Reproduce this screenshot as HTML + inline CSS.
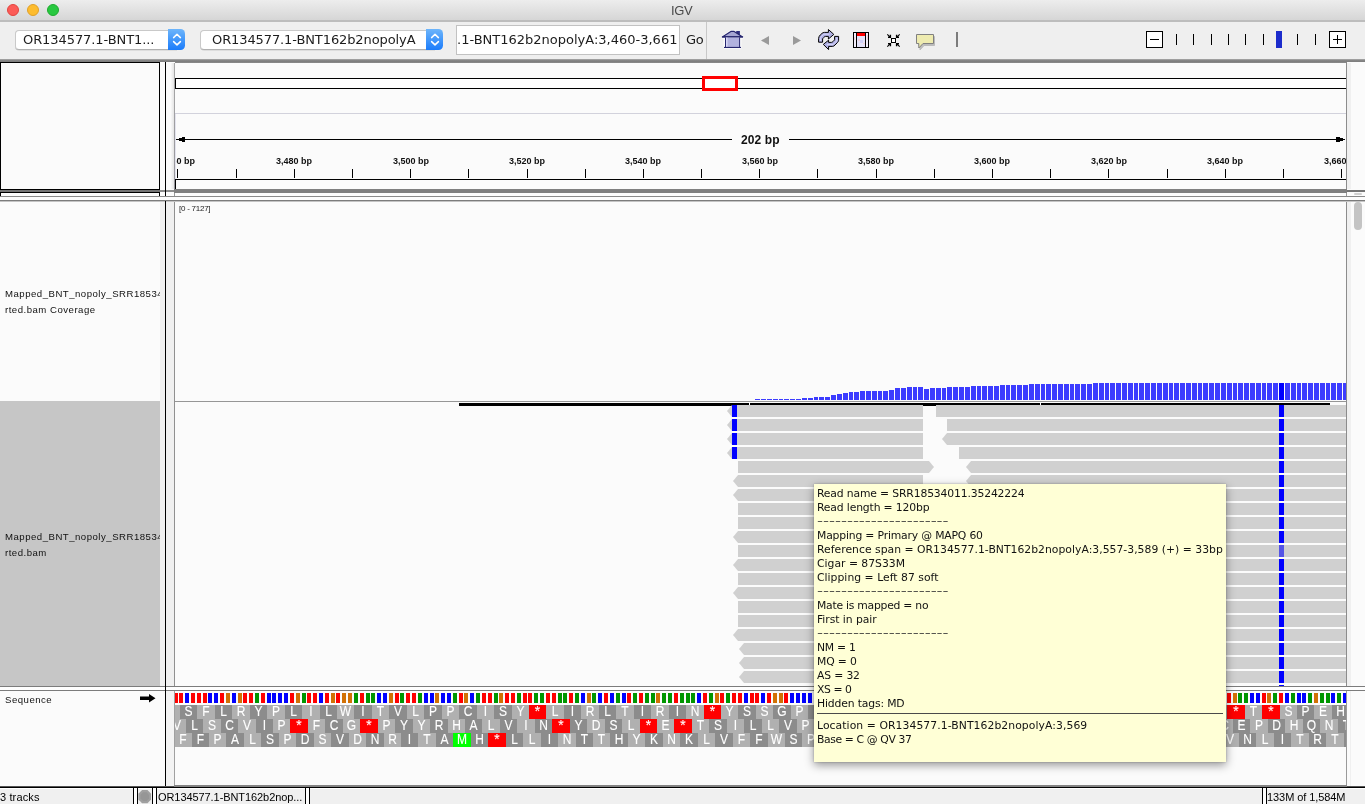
<!DOCTYPE html>
<html lang="en">
<head>
<meta charset="utf-8">
<title>IGV</title>
<style>
html,body{margin:0;padding:0;}
body{width:1365px;height:804px;overflow:hidden;position:relative;background:#fbfbfb;font-family:"Liberation Sans",sans-serif;color:#000;}
.a{position:absolute;}
.t{position:absolute;white-space:pre;line-height:1;will-change:transform;}
.lg{font-family:"DejaVu Sans","Liberation Sans",sans-serif;}
#titlebar{left:0;top:0;width:1365px;height:20px;background:linear-gradient(#ededed,#d6d6d6);border-bottom:2px solid #bdbdbd;}
#toolbar{left:0;top:22px;width:1365px;height:37px;background:#efefef;}
.dot{position:absolute;top:4px;width:12px;height:12px;border-radius:50%;box-sizing:border-box;}
.combo{position:absolute;top:29px;height:21px;box-sizing:border-box;}
.combo .w{position:absolute;left:-0.5px;top:0.5px;bottom:0.5px;right:8px;background:#fff;border:1px solid #c9c9c9;border-bottom-color:#b0b0b0;border-radius:4px 0 0 4px;box-shadow:0 0.5px 0.5px rgba(0,0,0,0.15);}
.combo .b{position:absolute;right:0;top:0;width:17px;height:21px;border-radius:0 4.5px 4.5px 0;background:linear-gradient(#6db5fb,#1b7cfb);}
#tip{left:814px;top:484px;width:412px;height:278px;background:#ffffd6;box-shadow:0 3px 9px rgba(0,0,0,0.42),0 0 2px rgba(0,0,0,0.25);}

.nm{font-size:9.6px;color:#111;letter-spacing:0.5px;}
.rl{font-weight:bold;font-size:9px;color:#111;}
.sb{position:absolute;top:787px;height:18px;box-sizing:border-box;border:1px solid #000;border-bottom:none;background:linear-gradient(#fff 0,#fff 1px,#f0f0f0 1px);}
.st{font-size:11px;color:#000;}
.aa{font-size:14px;fill:#fff;stroke:#fff;stroke-width:0.12px;text-anchor:middle;font-family:"Liberation Sans",sans-serif;}
</style>
</head>
<body>

<div id="titlebar" class="a">
<div class="dot" style="left:7px;background:#fc5b57;border:0.5px solid #e2443f;"></div>
<div class="dot" style="left:27px;background:#fdbc2e;border:0.5px solid #e0a028;"></div>
<div class="dot" style="left:47px;background:#28c840;border:0.5px solid #1eab2e;"></div>
<div class="t " id="ttl" style="left:671px;top:3.6px;font-size:13px;letter-spacing:-0.400px;color:#4a4a4a;">IGV</div>
</div>
<div id="toolbar" class="a"></div>
<div class="combo" style="left:15px;width:170px;"><div class="w"></div><div class="b"></div></div>
<div class="combo" style="left:200px;width:243px;"><div class="w"></div><div class="b"></div></div>
<div class="t lg" id="c1" style="left:23px;top:32.8px;font-size:13px;letter-spacing:-0.075px;color:#1c1c1c;">OR134577.1-BNT1...</div>
<div class="t lg" id="c2" style="left:212px;top:32.8px;font-size:13px;letter-spacing:-0.100px;color:#1c1c1c;">OR134577.1-BNT162b2nopolyA</div>
<svg class="a" style="left:170.5px;top:29px;" width="12" height="21" viewBox="0 0 12 21"><path d="M2.6 8.6 L6 5.3 L9.4 8.6 M2.6 12.6 L6 15.9 L9.4 12.6" fill="none" stroke="#fff" stroke-width="1.5" stroke-linecap="round" stroke-linejoin="round"/></svg>
<svg class="a" style="left:428.5px;top:29px;" width="12" height="21" viewBox="0 0 12 21"><path d="M2.6 8.6 L6 5.3 L9.4 8.6 M2.6 12.6 L6 15.9 L9.4 12.6" fill="none" stroke="#fff" stroke-width="1.5" stroke-linecap="round" stroke-linejoin="round"/></svg>
<div class="a" style="left:456px;top:25px;width:224px;height:30px;box-sizing:border-box;background:#fff;border:1px solid #c2c2c2;overflow:hidden;"><div class="t lg" id="c3" style="left:0px;top:6.8px;font-size:13px;letter-spacing:0.000px;color:#1c1c1c;">.1-BNT162b2nopolyA:3,460-3,661</div></div>
<div class="t lg" id="c4" style="left:686px;top:32.8px;font-size:13px;letter-spacing:-0.225px;color:#1c1c1c;">Go</div>
<div class="a" style="left:706px;top:22px;width:1px;height:37px;background:#c8c8c8;"></div>
<svg class="a" style="left:710px;top:22px;" width="260" height="37" viewBox="710 22 260 37">
<g shape-rendering="auto"><path d="M722 37.4 L731 31 H734 L743 37.4 Z" fill="#fff" stroke="#fff" stroke-width="2.2" stroke-linejoin="round" opacity="0.9"/><rect x="723.6" y="37" width="17.8" height="11.6" fill="#fff" opacity="0.9"/><rect x="736.2" y="31" width="3.7" height="4.6" fill="#2d2d7e"/><path d="M722.3 36.9 L731.2 31.3 H733.8 L742.7 36.9 Z" fill="#a6a6d2" stroke="#26266e" stroke-width="1.2" stroke-linejoin="round"/><rect x="722" y="36.3" width="21" height="1.3" rx="0.6" fill="#26266e"/><rect x="725.5" y="37.6" width="14" height="9.6" fill="#b2b2de"/><rect x="725.9" y="37.6" width="1.6" height="9.6" fill="#d6d6f6"/><rect x="725" y="37.4" width="1" height="10" fill="#26266e"/><rect x="739.1" y="37.4" width="1" height="10" fill="#26266e"/><rect x="724" y="46.9" width="17" height="1.1" fill="#26266e"/></g>
<path d="M761 40.5 L769 36 V45 Z" fill="#9a9a9a"/><path d="M801 40.5 L793 36 V45 Z" fill="#9a9a9a"/>
<g stroke="#000" stroke-width="1" stroke-linejoin="miter" fill="#b0b0e2"><path d="M818.6 42.2 V38.4 Q818.8 36.4 820.2 35 L822 33.4 Q823 32.4 824.4 32.4 H828.4 V29.5 L833.8 34.4 L828.4 39 V36.4 H825.6 Q824.6 36.5 823.8 37.4 L822.6 38.8 V42.2 Z"/><path d="M838.6 36.4 V40.4 Q838.4 41.6 837.4 42.6 L835 45 Q833.8 46.4 832.6 46.4 H828.6 V49.6 L823.3 44.4 L828.6 40.2 V42.4 H831.4 Q832.2 42.3 833 41.6 L834.6 39.8 V36.4 Z"/></g><path d="M820.4 41 V38.6 Q820.6 37.2 821.6 36.2 L823.4 34.6 Q824 34.2 825 34.2 H829.4" stroke="#d6d6fa" stroke-width="1" fill="none"/><path d="M836.8 37.6 V40.2 Q836.6 41.2 835.8 42 L833.6 44 Q833 44.6 832 44.6 H827" stroke="#d6d6fa" stroke-width="1" fill="none"/>
<g shape-rendering="crispEdges"><rect x="853" y="32" width="16" height="16" fill="#000"/><rect x="854" y="33" width="14" height="14" fill="#f3effb"/><rect x="857" y="36" width="8" height="11" fill="#e4e2f8"/><rect x="857" y="33" width="8" height="3" fill="#ff0000"/><rect x="856" y="33" width="1" height="14" fill="#000"/><rect x="865" y="33" width="1" height="14" fill="#000"/><rect x="854" y="37" width="1" height="3" fill="#f0d4dc"/><rect x="867" y="35" width="1" height="5" fill="#f0d4dc"/><rect x="858" y="39" width="2" height="2" fill="#f2cfd6"/><rect x="860" y="40" width="3" height="3" fill="#cfcff6"/><rect x="863" y="43" width="2" height="1" fill="#f2cfd6"/></g>
<g stroke="#000" fill="none"><rect x="891.5" y="38.5" width="4" height="4" fill="#fff" stroke-width="1" shape-rendering="crispEdges"/><path d="M887.3 34.3 L890.4 37.4 M899.7 34.3 L896.6 37.4 M887.3 46.7 L890.4 43.6 M899.7 46.7 L896.6 43.6" stroke-width="1.1"/><path d="M888 37.2 H890.4 V34.8 M899 37.2 H896.6 V34.8 M888 43.8 H890.4 V46.2 M899 43.8 H896.6 V46.2" stroke-width="1.4"/></g>
<path d="M917.5 35.5 H933.5 V44.5 H923 L919 49 V44.5 H917.5 Z" fill="#9a9a9a" stroke="#9a9a9a" stroke-width="1" opacity="0.6" transform="translate(1,1)"/><path d="M916.5 34.5 H933.5 V43.5 H923 L918.8 48 V43.5 H916.5 Z" fill="#eeebb0" stroke="#808080" stroke-width="1"/>
<rect x="956" y="32" width="2" height="15" fill="#7c7c7c"/>
</svg>
<svg class="a" style="left:1140px;top:22px;" width="225" height="37" viewBox="1140 22 225 37">
<rect x="1146.5" y="31.5" width="16" height="16" fill="#fff" stroke="#000"/><path d="M1150 39.5 H1159" stroke="#000" stroke-width="1"/>
<rect x="1176" y="34" width="1" height="11" fill="#000"/>
<rect x="1193" y="34" width="1" height="11" fill="#000"/>
<rect x="1211" y="34" width="1" height="11" fill="#000"/>
<rect x="1228" y="34" width="1" height="11" fill="#000"/>
<rect x="1245" y="34" width="1" height="11" fill="#000"/>
<rect x="1263" y="34" width="1" height="11" fill="#000"/>
<rect x="1297" y="34" width="1" height="11" fill="#000"/>
<rect x="1315" y="34" width="1" height="11" fill="#000"/>
<rect x="1276" y="31" width="6" height="17" fill="#1c2ccc"/>
<rect x="1329.5" y="31.5" width="16" height="16" fill="#fff" stroke="#000"/><path d="M1333 39.5 H1342 M1337.5 35 V44" stroke="#000" stroke-width="1"/>
</svg>
<div class="a" style="left:0;top:59px;width:1365px;height:4px;background:linear-gradient(#b4b4b4 0,#8a8a8a 25%,#7e7e7e 60%,#8c8c8c 100%);"></div>
<div class="a" style="left:0;top:62px;width:160px;height:128px;box-sizing:border-box;border:1px solid #000;background:#fbfbfb;"></div>
<div class="a" style="left:160px;top:62px;width:15px;height:128px;background:#fbfbfb;"></div>
<div class="a" style="left:171px;top:63px;width:3px;height:126px;background:linear-gradient(90deg,#f8f8f8,#e4e4e4);"></div>
<div class="a" style="left:1347px;top:62px;width:18px;height:128px;background:#fbfbfb;"></div>
<div class="a" style="left:1347px;top:63px;width:4px;height:126px;background:#f0f0f0;"></div>
<div class="a" style="left:0;top:189px;width:160px;height:4px;background:#000;"></div>
<div class="a" style="left:0;top:190px;width:160px;height:2px;background:#757575;"></div>
<div class="a" style="left:160px;top:190px;width:14px;height:2px;background:#8c8c8c;"></div>
<div class="a" style="left:174px;top:189px;width:1173px;height:4px;background:#808080;"></div>
<div class="a" style="left:1347px;top:190px;width:18px;height:2px;background:#757575;"></div>
<div class="a" style="left:0;top:193px;width:1365px;height:3px;background:#fdfdfd;"></div>
<div class="a" style="left:0;top:193px;width:1px;height:3px;background:#000;"></div>
<div class="a" style="left:159px;top:193px;width:1px;height:3px;background:#000;"></div>
<div class="a" style="left:174px;top:193px;width:1px;height:3px;background:#9a9a9a;"></div>
<div class="a" style="left:1346px;top:193px;width:1px;height:3px;background:#9a9a9a;"></div>
<div class="a" style="left:1354px;top:193px;width:8px;height:2px;background:#d0d0d0;border-radius:1px;"></div>
<div class="a" style="left:0;top:196px;width:1365px;height:1px;background:#8a8a8a;"></div>
<div class="a" style="left:0;top:197px;width:1365px;height:3px;background:#fdfdfd;"></div>
<div class="a" style="left:0;top:200px;width:1365px;height:1px;background:#7c7c7c;"></div>
<div class="a" style="left:0;top:201px;width:1365px;height:1px;background:#c4c4c4;"></div>
<div class="a" style="left:0;top:401px;width:160px;height:285px;background:#c6c6c6;"></div>
<div class="a" style="left:160px;top:202px;width:14px;height:484px;background:#f0f0f0;"></div>
<div class="a" style="left:166px;top:691px;width:8px;height:95px;background:#f3f3f3;"></div>
<div class="a" style="left:165px;top:62px;width:1px;height:134px;background:#000;"></div>
<div class="a" style="left:165px;top:201px;width:1px;height:586px;background:#000;"></div>
<div class="a" style="left:0;top:196px;width:1365px;height:1px;background:#8a8a8a;"></div>
<div class="a" style="left:174px;top:63px;width:1px;height:126px;background:linear-gradient(#a8a8a8,#96969c);"></div>
<div class="a" style="left:175px;top:114px;width:1px;height:65px;background:#e4e4ee;"></div>
<div class="a" style="left:174px;top:202px;width:1px;height:484px;background:#909090;"></div>
<div class="a" style="left:174px;top:691px;width:1px;height:95px;background:#a0a0a0;"></div>
<div class="a" style="left:1346px;top:63px;width:1px;height:126px;background:#8c8c8c;"></div>
<div class="a" style="left:1346px;top:202px;width:1px;height:484px;background:#8c8c8c;"></div>
<div class="a" style="left:1346px;top:691px;width:1px;height:95px;background:#9a9a9a;"></div>
<div class="a" style="left:1347px;top:202px;width:4px;height:484px;background:#f0f0f0;"></div>
<div class="a" style="left:1354px;top:202px;width:8px;height:28px;background:#c4c4c4;border-radius:4px;"></div>
<div class="a" style="left:1350px;top:691px;width:1px;height:95px;background:#f0f0f0;"></div>
<div class="a" style="left:0;top:686px;width:1365px;height:1px;background:#7c7c7c;"></div>
<div class="a" style="left:0;top:687px;width:1365px;height:3px;background:#fefefe;"></div>
<div class="a" style="left:0;top:690px;width:1365px;height:1px;background:#7c7c7c;"></div>
<div class="a" style="left:165px;top:686px;width:1px;height:5px;background:#000;"></div>
<svg class="a" style="left:175px;top:63px;will-change:transform;" width="1171" height="723" viewBox="175 63 1171 723" shape-rendering="crispEdges">
<rect x="175" y="79" width="1171" height="9" fill="#fff"/>
<rect x="175" y="78" width="1171" height="1" fill="#000"/><rect x="175" y="88" width="1171" height="1" fill="#000"/><rect x="175" y="78" width="1" height="11" fill="#000"/>
<rect x="703.5" y="77.5" width="33" height="12" fill="#fff" stroke="#ff0000" stroke-width="3"/>
<rect x="175" y="113" width="1171" height="1" fill="#d2d2dc"/>
<rect x="176" y="139" width="556" height="1" fill="#000"/><rect x="789" y="139" width="556" height="1" fill="#000"/>
<rect x="179" y="138" width="3" height="3" fill="#000"/><rect x="182" y="137" width="3" height="5" fill="#000"/>
<rect x="1336" y="137" width="4" height="5" fill="#000"/><rect x="1340" y="138" width="3" height="3" fill="#000"/>
<rect x="177" y="169" width="1" height="9" fill="#000"/>
<rect x="236" y="169" width="1" height="9" fill="#000"/>
<rect x="294" y="169" width="1" height="9" fill="#000"/>
<rect x="352" y="169" width="1" height="9" fill="#000"/>
<rect x="410" y="169" width="1" height="9" fill="#000"/>
<rect x="468" y="169" width="1" height="9" fill="#000"/>
<rect x="527" y="169" width="1" height="9" fill="#000"/>
<rect x="585" y="169" width="1" height="9" fill="#000"/>
<rect x="643" y="169" width="1" height="9" fill="#000"/>
<rect x="701" y="169" width="1" height="9" fill="#000"/>
<rect x="759" y="169" width="1" height="9" fill="#000"/>
<rect x="817" y="169" width="1" height="9" fill="#000"/>
<rect x="876" y="169" width="1" height="9" fill="#000"/>
<rect x="934" y="169" width="1" height="9" fill="#000"/>
<rect x="992" y="169" width="1" height="9" fill="#000"/>
<rect x="1050" y="169" width="1" height="9" fill="#000"/>
<rect x="1108" y="169" width="1" height="9" fill="#000"/>
<rect x="1167" y="169" width="1" height="9" fill="#000"/>
<rect x="1225" y="169" width="1" height="9" fill="#000"/>
<rect x="1283" y="169" width="1" height="9" fill="#000"/>
<rect x="1341" y="169" width="1" height="9" fill="#000"/>
<rect x="175" y="179" width="1171" height="1" fill="#000"/><rect x="175" y="179" width="1" height="10" fill="#000"/>
<rect x="755" y="399" width="5" height="1" fill="#3c3cff"/>
<rect x="761" y="399" width="5" height="1" fill="#3c3cff"/>
<rect x="767" y="399" width="5" height="1" fill="#3c3cff"/>
<rect x="773" y="399" width="5" height="1" fill="#3c3cff"/>
<rect x="779" y="399" width="4" height="1" fill="#3c3cff"/>
<rect x="784" y="399" width="5" height="1" fill="#3c3cff"/>
<rect x="790" y="399" width="5" height="1" fill="#3c3cff"/>
<rect x="796" y="399" width="5" height="1" fill="#3c3cff"/>
<rect x="802" y="398" width="5" height="2" fill="#3c3cff"/>
<rect x="808" y="398" width="5" height="2" fill="#3c3cff"/>
<rect x="814" y="397" width="4" height="3" fill="#3c3cff"/>
<rect x="819" y="397" width="5" height="3" fill="#3c3cff"/>
<rect x="825" y="397" width="5" height="3" fill="#3c3cff"/>
<rect x="831" y="395" width="5" height="5" fill="#3c3cff"/>
<rect x="837" y="394" width="5" height="6" fill="#3c3cff"/>
<rect x="843" y="393" width="5" height="7" fill="#3c3cff"/>
<rect x="849" y="392" width="4" height="8" fill="#3c3cff"/>
<rect x="854" y="392" width="5" height="8" fill="#3c3cff"/>
<rect x="860" y="391" width="5" height="9" fill="#3c3cff"/>
<rect x="866" y="391" width="5" height="9" fill="#3c3cff"/>
<rect x="872" y="391" width="5" height="9" fill="#3c3cff"/>
<rect x="878" y="391" width="4" height="9" fill="#3c3cff"/>
<rect x="883" y="391" width="5" height="9" fill="#3c3cff"/>
<rect x="889" y="390" width="5" height="10" fill="#3c3cff"/>
<rect x="895" y="388" width="5" height="12" fill="#3c3cff"/>
<rect x="901" y="388" width="5" height="12" fill="#3c3cff"/>
<rect x="907" y="387" width="5" height="13" fill="#3c3cff"/>
<rect x="913" y="387" width="4" height="13" fill="#3c3cff"/>
<rect x="918" y="387" width="5" height="13" fill="#3c3cff"/>
<rect x="924" y="389" width="5" height="11" fill="#3c3cff"/>
<rect x="930" y="388" width="5" height="12" fill="#3c3cff"/>
<rect x="936" y="388" width="5" height="12" fill="#3c3cff"/>
<rect x="942" y="388" width="4" height="12" fill="#3c3cff"/>
<rect x="947" y="387" width="5" height="13" fill="#3c3cff"/>
<rect x="953" y="387" width="5" height="13" fill="#3c3cff"/>
<rect x="959" y="387" width="5" height="13" fill="#3c3cff"/>
<rect x="965" y="387" width="5" height="13" fill="#3c3cff"/>
<rect x="971" y="386" width="5" height="14" fill="#3c3cff"/>
<rect x="977" y="386" width="4" height="14" fill="#3c3cff"/>
<rect x="982" y="386" width="5" height="14" fill="#3c3cff"/>
<rect x="988" y="386" width="5" height="14" fill="#3c3cff"/>
<rect x="994" y="386" width="5" height="14" fill="#3c3cff"/>
<rect x="1000" y="385" width="5" height="15" fill="#3c3cff"/>
<rect x="1006" y="385" width="4" height="15" fill="#3c3cff"/>
<rect x="1011" y="385" width="5" height="15" fill="#3c3cff"/>
<rect x="1017" y="385" width="5" height="15" fill="#3c3cff"/>
<rect x="1023" y="385" width="5" height="15" fill="#3c3cff"/>
<rect x="1029" y="384" width="5" height="16" fill="#3c3cff"/>
<rect x="1035" y="384" width="5" height="16" fill="#3c3cff"/>
<rect x="1041" y="384" width="4" height="16" fill="#3c3cff"/>
<rect x="1046" y="384" width="5" height="16" fill="#3c3cff"/>
<rect x="1052" y="384" width="5" height="16" fill="#3c3cff"/>
<rect x="1058" y="384" width="5" height="16" fill="#3c3cff"/>
<rect x="1064" y="384" width="5" height="16" fill="#3c3cff"/>
<rect x="1070" y="384" width="4" height="16" fill="#3c3cff"/>
<rect x="1075" y="384" width="5" height="16" fill="#3c3cff"/>
<rect x="1081" y="384" width="5" height="16" fill="#3c3cff"/>
<rect x="1087" y="384" width="5" height="16" fill="#3c3cff"/>
<rect x="1093" y="383" width="5" height="17" fill="#3c3cff"/>
<rect x="1099" y="383" width="5" height="17" fill="#3c3cff"/>
<rect x="1105" y="383" width="4" height="17" fill="#3c3cff"/>
<rect x="1110" y="383" width="5" height="17" fill="#3c3cff"/>
<rect x="1116" y="383" width="5" height="17" fill="#3c3cff"/>
<rect x="1122" y="383" width="5" height="17" fill="#3c3cff"/>
<rect x="1128" y="383" width="5" height="17" fill="#3c3cff"/>
<rect x="1134" y="383" width="4" height="17" fill="#3c3cff"/>
<rect x="1139" y="383" width="5" height="17" fill="#3c3cff"/>
<rect x="1145" y="383" width="5" height="17" fill="#3c3cff"/>
<rect x="1151" y="383" width="5" height="17" fill="#3c3cff"/>
<rect x="1157" y="383" width="5" height="17" fill="#3c3cff"/>
<rect x="1163" y="383" width="5" height="17" fill="#3c3cff"/>
<rect x="1169" y="383" width="4" height="17" fill="#3c3cff"/>
<rect x="1174" y="383" width="5" height="17" fill="#3c3cff"/>
<rect x="1180" y="383" width="5" height="17" fill="#3c3cff"/>
<rect x="1186" y="383" width="5" height="17" fill="#3c3cff"/>
<rect x="1192" y="383" width="5" height="17" fill="#3c3cff"/>
<rect x="1198" y="383" width="4" height="17" fill="#3c3cff"/>
<rect x="1203" y="383" width="5" height="17" fill="#3c3cff"/>
<rect x="1209" y="383" width="5" height="17" fill="#3c3cff"/>
<rect x="1215" y="383" width="5" height="17" fill="#3c3cff"/>
<rect x="1221" y="383" width="5" height="17" fill="#3c3cff"/>
<rect x="1227" y="383" width="5" height="17" fill="#3c3cff"/>
<rect x="1233" y="383" width="4" height="17" fill="#3c3cff"/>
<rect x="1238" y="383" width="5" height="17" fill="#3c3cff"/>
<rect x="1244" y="383" width="5" height="17" fill="#3c3cff"/>
<rect x="1250" y="383" width="5" height="17" fill="#3c3cff"/>
<rect x="1256" y="383" width="5" height="17" fill="#3c3cff"/>
<rect x="1262" y="383" width="4" height="17" fill="#3c3cff"/>
<rect x="1267" y="383" width="5" height="17" fill="#3c3cff"/>
<rect x="1273" y="383" width="5" height="17" fill="#3c3cff"/>
<rect x="1279" y="383" width="5" height="17" fill="#0000ff"/>
<rect x="1285" y="383" width="5" height="17" fill="#3c3cff"/>
<rect x="1291" y="383" width="5" height="17" fill="#3c3cff"/>
<rect x="1297" y="383" width="4" height="17" fill="#3c3cff"/>
<rect x="1302" y="383" width="5" height="17" fill="#3c3cff"/>
<rect x="1308" y="383" width="5" height="17" fill="#3c3cff"/>
<rect x="1314" y="383" width="5" height="17" fill="#3c3cff"/>
<rect x="1320" y="383" width="5" height="17" fill="#3c3cff"/>
<rect x="1326" y="383" width="4" height="17" fill="#3c3cff"/>
<rect x="1331" y="383" width="5" height="17" fill="#3c3cff"/>
<rect x="1337" y="383" width="5" height="17" fill="#3c3cff"/>
<rect x="1343" y="383" width="3" height="17" fill="#3c3cff"/>
<rect x="175" y="401" width="1171" height="1" fill="#969696"/>
<rect x="459" y="403" width="871" height="3" fill="#000"/>
<rect x="749" y="403" width="1" height="3" fill="#fff"/><rect x="1040" y="403" width="1" height="3" fill="#fff"/>
<polygon points="732,405 727,411 732,417 923,417 923,405" fill="#d0d0d0" shape-rendering="auto"/>
<rect x="732" y="405" width="5" height="12" fill="#0000ff"/>
<polygon points="936,405 936,417 1346,417 1346,405" fill="#d0d0d0" shape-rendering="auto"/>
<rect x="1279" y="405" width="5" height="12" fill="#0000ff"/>
<polygon points="732,419 727,425 732,431 923,431 923,419" fill="#d0d0d0" shape-rendering="auto"/>
<rect x="732" y="419" width="5" height="12" fill="#0000ff"/>
<polygon points="947,419 947,431 1346,431 1346,419" fill="#d0d0d0" shape-rendering="auto"/>
<rect x="1279" y="419" width="5" height="12" fill="#0000ff"/>
<polygon points="732,433 727,439 732,445 923,445 923,433" fill="#d0d0d0" shape-rendering="auto"/>
<rect x="732" y="433" width="5" height="12" fill="#0000ff"/>
<polygon points="947,433 942,439 947,445 1346,445 1346,433" fill="#d0d0d0" shape-rendering="auto"/>
<rect x="1279" y="433" width="5" height="12" fill="#0000ff"/>
<polygon points="732,447 727,453 732,459 923,459 923,447" fill="#d0d0d0" shape-rendering="auto"/>
<rect x="732" y="447" width="5" height="12" fill="#0000ff"/>
<polygon points="959,447 959,459 1346,459 1346,447" fill="#d0d0d0" shape-rendering="auto"/>
<rect x="1279" y="447" width="5" height="12" fill="#0000ff"/>
<polygon points="738,461 738,473 929,473 934,467 929,461" fill="#d0d0d0" shape-rendering="auto"/>
<polygon points="971,461 966,467 971,473 1346,473 1346,461" fill="#d0d0d0" shape-rendering="auto"/>
<rect x="1279" y="461" width="5" height="12" fill="#0000ff"/>
<polygon points="738,475 733,481 738,487 923,487 923,475" fill="#d0d0d0" shape-rendering="auto"/>
<polygon points="971,475 966,481 971,487 1346,487 1346,475" fill="#d0d0d0" shape-rendering="auto"/>
<rect x="1279" y="475" width="5" height="12" fill="#0000ff"/>
<polygon points="738,489 733,495 738,501 1346,501 1346,489" fill="#d0d0d0" shape-rendering="auto"/>
<rect x="1279" y="489" width="5" height="12" fill="#0000ff"/>
<polygon points="738,503 738,515 1346,515 1346,503" fill="#d0d0d0" shape-rendering="auto"/>
<rect x="1279" y="503" width="5" height="12" fill="#0000ff"/>
<polygon points="738,517 738,529 1346,529 1346,517" fill="#d0d0d0" shape-rendering="auto"/>
<rect x="1279" y="517" width="5" height="12" fill="#0000ff"/>
<polygon points="738,531 733,537 738,543 1346,543 1346,531" fill="#d0d0d0" shape-rendering="auto"/>
<rect x="1279" y="531" width="5" height="12" fill="#0000ff"/>
<polygon points="738,545 738,557 1346,557 1346,545" fill="#d0d0d0" shape-rendering="auto"/>
<rect x="1279" y="545" width="5" height="12" fill="#5555e6"/>
<polygon points="738,559 733,565 738,571 1346,571 1346,559" fill="#d0d0d0" shape-rendering="auto"/>
<rect x="1279" y="559" width="5" height="12" fill="#0000ff"/>
<polygon points="738,573 738,585 1346,585 1346,573" fill="#d0d0d0" shape-rendering="auto"/>
<rect x="1279" y="573" width="5" height="12" fill="#0000ff"/>
<polygon points="738,587 733,593 738,599 1346,599 1346,587" fill="#d0d0d0" shape-rendering="auto"/>
<rect x="1279" y="587" width="5" height="12" fill="#0000ff"/>
<polygon points="738,601 738,613 1346,613 1346,601" fill="#d0d0d0" shape-rendering="auto"/>
<rect x="1279" y="601" width="5" height="12" fill="#0000ff"/>
<polygon points="738,615 738,627 1346,627 1346,615" fill="#d0d0d0" shape-rendering="auto"/>
<rect x="1279" y="615" width="5" height="12" fill="#0000ff"/>
<polygon points="738,629 733,635 738,641 1346,641 1346,629" fill="#d0d0d0" shape-rendering="auto"/>
<rect x="1279" y="629" width="5" height="12" fill="#0000ff"/>
<polygon points="744,643 739,649 744,655 1346,655 1346,643" fill="#d0d0d0" shape-rendering="auto"/>
<rect x="1279" y="643" width="5" height="12" fill="#0000ff"/>
<polygon points="744,657 739,663 744,669 1346,669 1346,657" fill="#d0d0d0" shape-rendering="auto"/>
<rect x="1279" y="657" width="5" height="12" fill="#0000ff"/>
<polygon points="744,671 739,677 744,683 1346,683 1346,671" fill="#d0d0d0" shape-rendering="auto"/>
<rect x="1279" y="671" width="5" height="12" fill="#0000ff"/>
<rect x="1279" y="685" width="5" height="1" fill="#0000ff"/>
<rect x="175" y="693" width="3" height="10" fill="#ff0000"/>
<rect x="179" y="693" width="4" height="10" fill="#ff0000"/>
<rect x="185" y="693" width="4" height="10" fill="#0000ff"/>
<rect x="191" y="693" width="4" height="10" fill="#ff0000"/>
<rect x="197" y="693" width="4" height="10" fill="#ff0000"/>
<rect x="203" y="693" width="4" height="10" fill="#ff0000"/>
<rect x="208" y="693" width="4" height="10" fill="#0000ff"/>
<rect x="214" y="693" width="4" height="10" fill="#0000ff"/>
<rect x="220" y="693" width="4" height="10" fill="#ff0000"/>
<rect x="226" y="693" width="4" height="10" fill="#d17105"/>
<rect x="232" y="693" width="4" height="10" fill="#0000ff"/>
<rect x="238" y="693" width="4" height="10" fill="#d17105"/>
<rect x="243" y="693" width="4" height="10" fill="#ff0000"/>
<rect x="249" y="693" width="4" height="10" fill="#ff0000"/>
<rect x="255" y="693" width="4" height="10" fill="#009600"/>
<rect x="261" y="693" width="4" height="10" fill="#ff0000"/>
<rect x="267" y="693" width="4" height="10" fill="#0000ff"/>
<rect x="272" y="693" width="4" height="10" fill="#0000ff"/>
<rect x="278" y="693" width="4" height="10" fill="#0000ff"/>
<rect x="284" y="693" width="4" height="10" fill="#0000ff"/>
<rect x="290" y="693" width="4" height="10" fill="#ff0000"/>
<rect x="296" y="693" width="4" height="10" fill="#d17105"/>
<rect x="302" y="693" width="4" height="10" fill="#009600"/>
<rect x="307" y="693" width="4" height="10" fill="#ff0000"/>
<rect x="313" y="693" width="4" height="10" fill="#ff0000"/>
<rect x="319" y="693" width="4" height="10" fill="#0000ff"/>
<rect x="325" y="693" width="4" height="10" fill="#ff0000"/>
<rect x="331" y="693" width="4" height="10" fill="#d17105"/>
<rect x="336" y="693" width="4" height="10" fill="#ff0000"/>
<rect x="342" y="693" width="4" height="10" fill="#d17105"/>
<rect x="348" y="693" width="4" height="10" fill="#d17105"/>
<rect x="354" y="693" width="4" height="10" fill="#009600"/>
<rect x="360" y="693" width="4" height="10" fill="#ff0000"/>
<rect x="366" y="693" width="4" height="10" fill="#009600"/>
<rect x="371" y="693" width="4" height="10" fill="#009600"/>
<rect x="377" y="693" width="4" height="10" fill="#0000ff"/>
<rect x="383" y="693" width="4" height="10" fill="#0000ff"/>
<rect x="389" y="693" width="4" height="10" fill="#d17105"/>
<rect x="395" y="693" width="4" height="10" fill="#ff0000"/>
<rect x="400" y="693" width="4" height="10" fill="#009600"/>
<rect x="406" y="693" width="4" height="10" fill="#ff0000"/>
<rect x="412" y="693" width="4" height="10" fill="#ff0000"/>
<rect x="418" y="693" width="4" height="10" fill="#009600"/>
<rect x="424" y="693" width="4" height="10" fill="#0000ff"/>
<rect x="430" y="693" width="4" height="10" fill="#0000ff"/>
<rect x="435" y="693" width="4" height="10" fill="#d17105"/>
<rect x="441" y="693" width="4" height="10" fill="#0000ff"/>
<rect x="447" y="693" width="4" height="10" fill="#0000ff"/>
<rect x="453" y="693" width="4" height="10" fill="#009600"/>
<rect x="459" y="693" width="4" height="10" fill="#ff0000"/>
<rect x="464" y="693" width="4" height="10" fill="#d17105"/>
<rect x="470" y="693" width="4" height="10" fill="#0000ff"/>
<rect x="476" y="693" width="4" height="10" fill="#009600"/>
<rect x="482" y="693" width="4" height="10" fill="#ff0000"/>
<rect x="488" y="693" width="4" height="10" fill="#ff0000"/>
<rect x="494" y="693" width="4" height="10" fill="#009600"/>
<rect x="499" y="693" width="4" height="10" fill="#d17105"/>
<rect x="505" y="693" width="4" height="10" fill="#ff0000"/>
<rect x="511" y="693" width="4" height="10" fill="#ff0000"/>
<rect x="517" y="693" width="4" height="10" fill="#009600"/>
<rect x="523" y="693" width="4" height="10" fill="#ff0000"/>
<rect x="528" y="693" width="4" height="10" fill="#ff0000"/>
<rect x="534" y="693" width="4" height="10" fill="#009600"/>
<rect x="540" y="693" width="4" height="10" fill="#009600"/>
<rect x="546" y="693" width="4" height="10" fill="#ff0000"/>
<rect x="552" y="693" width="4" height="10" fill="#ff0000"/>
<rect x="558" y="693" width="4" height="10" fill="#009600"/>
<rect x="563" y="693" width="4" height="10" fill="#009600"/>
<rect x="569" y="693" width="4" height="10" fill="#ff0000"/>
<rect x="575" y="693" width="4" height="10" fill="#009600"/>
<rect x="581" y="693" width="4" height="10" fill="#0000ff"/>
<rect x="587" y="693" width="4" height="10" fill="#d17105"/>
<rect x="592" y="693" width="4" height="10" fill="#009600"/>
<rect x="598" y="693" width="4" height="10" fill="#0000ff"/>
<rect x="604" y="693" width="4" height="10" fill="#ff0000"/>
<rect x="610" y="693" width="4" height="10" fill="#0000ff"/>
<rect x="616" y="693" width="4" height="10" fill="#009600"/>
<rect x="622" y="693" width="4" height="10" fill="#0000ff"/>
<rect x="627" y="693" width="4" height="10" fill="#ff0000"/>
<rect x="633" y="693" width="4" height="10" fill="#009600"/>
<rect x="639" y="693" width="4" height="10" fill="#ff0000"/>
<rect x="645" y="693" width="4" height="10" fill="#009600"/>
<rect x="651" y="693" width="4" height="10" fill="#009600"/>
<rect x="656" y="693" width="4" height="10" fill="#d17105"/>
<rect x="662" y="693" width="4" height="10" fill="#009600"/>
<rect x="668" y="693" width="4" height="10" fill="#009600"/>
<rect x="674" y="693" width="4" height="10" fill="#ff0000"/>
<rect x="680" y="693" width="4" height="10" fill="#009600"/>
<rect x="686" y="693" width="4" height="10" fill="#009600"/>
<rect x="691" y="693" width="4" height="10" fill="#009600"/>
<rect x="697" y="693" width="4" height="10" fill="#0000ff"/>
<rect x="703" y="693" width="4" height="10" fill="#ff0000"/>
<rect x="709" y="693" width="4" height="10" fill="#009600"/>
<rect x="715" y="693" width="4" height="10" fill="#d17105"/>
<rect x="720" y="693" width="4" height="10" fill="#ff0000"/>
<rect x="726" y="693" width="4" height="10" fill="#009600"/>
<rect x="732" y="693" width="4" height="10" fill="#ff0000"/>
<rect x="738" y="693" width="4" height="10" fill="#ff0000"/>
<rect x="744" y="693" width="4" height="10" fill="#0000ff"/>
<rect x="750" y="693" width="4" height="10" fill="#ff0000"/>
<rect x="755" y="693" width="4" height="10" fill="#ff0000"/>
<rect x="761" y="693" width="4" height="10" fill="#0000ff"/>
<rect x="767" y="693" width="4" height="10" fill="#ff0000"/>
<rect x="773" y="693" width="4" height="10" fill="#d17105"/>
<rect x="779" y="693" width="4" height="10" fill="#d17105"/>
<rect x="784" y="693" width="4" height="10" fill="#ff0000"/>
<rect x="790" y="693" width="4" height="10" fill="#0000ff"/>
<rect x="796" y="693" width="4" height="10" fill="#0000ff"/>
<rect x="802" y="693" width="4" height="10" fill="#0000ff"/>
<rect x="808" y="693" width="4" height="10" fill="#0000ff"/>
<rect x="814" y="693" width="4" height="10" fill="#009600"/>
<rect x="819" y="693" width="4" height="10" fill="#0000ff"/>
<rect x="825" y="693" width="4" height="10" fill="#ff0000"/>
<rect x="831" y="693" width="4" height="10" fill="#d17105"/>
<rect x="837" y="693" width="4" height="10" fill="#d17105"/>
<rect x="843" y="693" width="4" height="10" fill="#ff0000"/>
<rect x="849" y="693" width="4" height="10" fill="#d17105"/>
<rect x="854" y="693" width="4" height="10" fill="#0000ff"/>
<rect x="860" y="693" width="4" height="10" fill="#0000ff"/>
<rect x="866" y="693" width="4" height="10" fill="#009600"/>
<rect x="872" y="693" width="4" height="10" fill="#0000ff"/>
<rect x="878" y="693" width="4" height="10" fill="#0000ff"/>
<rect x="883" y="693" width="4" height="10" fill="#009600"/>
<rect x="889" y="693" width="4" height="10" fill="#ff0000"/>
<rect x="895" y="693" width="4" height="10" fill="#d17105"/>
<rect x="901" y="693" width="4" height="10" fill="#ff0000"/>
<rect x="907" y="693" width="4" height="10" fill="#ff0000"/>
<rect x="913" y="693" width="4" height="10" fill="#0000ff"/>
<rect x="918" y="693" width="4" height="10" fill="#d17105"/>
<rect x="924" y="693" width="4" height="10" fill="#ff0000"/>
<rect x="930" y="693" width="4" height="10" fill="#d17105"/>
<rect x="936" y="693" width="4" height="10" fill="#ff0000"/>
<rect x="942" y="693" width="4" height="10" fill="#ff0000"/>
<rect x="947" y="693" width="4" height="10" fill="#0000ff"/>
<rect x="953" y="693" width="4" height="10" fill="#0000ff"/>
<rect x="959" y="693" width="4" height="10" fill="#ff0000"/>
<rect x="965" y="693" width="4" height="10" fill="#d17105"/>
<rect x="971" y="693" width="4" height="10" fill="#d17105"/>
<rect x="977" y="693" width="4" height="10" fill="#ff0000"/>
<rect x="982" y="693" width="4" height="10" fill="#d17105"/>
<rect x="988" y="693" width="4" height="10" fill="#0000ff"/>
<rect x="994" y="693" width="4" height="10" fill="#ff0000"/>
<rect x="1000" y="693" width="4" height="10" fill="#d17105"/>
<rect x="1006" y="693" width="4" height="10" fill="#0000ff"/>
<rect x="1011" y="693" width="4" height="10" fill="#ff0000"/>
<rect x="1017" y="693" width="4" height="10" fill="#d17105"/>
<rect x="1023" y="693" width="4" height="10" fill="#0000ff"/>
<rect x="1029" y="693" width="4" height="10" fill="#0000ff"/>
<rect x="1035" y="693" width="4" height="10" fill="#ff0000"/>
<rect x="1041" y="693" width="4" height="10" fill="#0000ff"/>
<rect x="1046" y="693" width="4" height="10" fill="#ff0000"/>
<rect x="1052" y="693" width="4" height="10" fill="#d17105"/>
<rect x="1058" y="693" width="4" height="10" fill="#d17105"/>
<rect x="1064" y="693" width="4" height="10" fill="#ff0000"/>
<rect x="1070" y="693" width="4" height="10" fill="#d17105"/>
<rect x="1075" y="693" width="4" height="10" fill="#ff0000"/>
<rect x="1081" y="693" width="4" height="10" fill="#0000ff"/>
<rect x="1087" y="693" width="4" height="10" fill="#0000ff"/>
<rect x="1093" y="693" width="4" height="10" fill="#009600"/>
<rect x="1099" y="693" width="4" height="10" fill="#d17105"/>
<rect x="1105" y="693" width="4" height="10" fill="#0000ff"/>
<rect x="1110" y="693" width="4" height="10" fill="#0000ff"/>
<rect x="1116" y="693" width="4" height="10" fill="#009600"/>
<rect x="1122" y="693" width="4" height="10" fill="#d17105"/>
<rect x="1128" y="693" width="4" height="10" fill="#ff0000"/>
<rect x="1134" y="693" width="4" height="10" fill="#d17105"/>
<rect x="1139" y="693" width="4" height="10" fill="#ff0000"/>
<rect x="1145" y="693" width="4" height="10" fill="#d17105"/>
<rect x="1151" y="693" width="4" height="10" fill="#ff0000"/>
<rect x="1157" y="693" width="4" height="10" fill="#d17105"/>
<rect x="1163" y="693" width="4" height="10" fill="#009600"/>
<rect x="1169" y="693" width="4" height="10" fill="#009600"/>
<rect x="1174" y="693" width="4" height="10" fill="#0000ff"/>
<rect x="1180" y="693" width="4" height="10" fill="#0000ff"/>
<rect x="1186" y="693" width="4" height="10" fill="#ff0000"/>
<rect x="1192" y="693" width="4" height="10" fill="#d17105"/>
<rect x="1198" y="693" width="4" height="10" fill="#009600"/>
<rect x="1203" y="693" width="4" height="10" fill="#0000ff"/>
<rect x="1209" y="693" width="4" height="10" fill="#0000ff"/>
<rect x="1215" y="693" width="4" height="10" fill="#ff0000"/>
<rect x="1221" y="693" width="4" height="10" fill="#d17105"/>
<rect x="1227" y="693" width="4" height="10" fill="#ff0000"/>
<rect x="1233" y="693" width="4" height="10" fill="#d17105"/>
<rect x="1238" y="693" width="4" height="10" fill="#009600"/>
<rect x="1244" y="693" width="4" height="10" fill="#009600"/>
<rect x="1250" y="693" width="4" height="10" fill="#0000ff"/>
<rect x="1256" y="693" width="4" height="10" fill="#0000ff"/>
<rect x="1262" y="693" width="4" height="10" fill="#ff0000"/>
<rect x="1267" y="693" width="4" height="10" fill="#d17105"/>
<rect x="1273" y="693" width="4" height="10" fill="#009600"/>
<rect x="1279" y="693" width="4" height="10" fill="#ff0000"/>
<rect x="1285" y="693" width="4" height="10" fill="#0000ff"/>
<rect x="1291" y="693" width="4" height="10" fill="#009600"/>
<rect x="1297" y="693" width="4" height="10" fill="#0000ff"/>
<rect x="1302" y="693" width="4" height="10" fill="#0000ff"/>
<rect x="1308" y="693" width="4" height="10" fill="#009600"/>
<rect x="1314" y="693" width="4" height="10" fill="#d17105"/>
<rect x="1320" y="693" width="4" height="10" fill="#009600"/>
<rect x="1326" y="693" width="4" height="10" fill="#009600"/>
<rect x="1331" y="693" width="4" height="10" fill="#0000ff"/>
<rect x="1337" y="693" width="4" height="10" fill="#009600"/>
<rect x="1343" y="693" width="3" height="10" fill="#0000ff"/>
<g shape-rendering="auto">
<rect x="175" y="705" width="5" height="14" fill="#b0b0b0" shape-rendering="crispEdges"/>
<rect x="180" y="705" width="17" height="14" fill="#8c8c8c" shape-rendering="crispEdges"/>
<text class="aa" transform="translate(188.5,716.4) scale(0.86,1)">S</text>
<rect x="197" y="705" width="18" height="14" fill="#b0b0b0" shape-rendering="crispEdges"/>
<text class="aa" transform="translate(206.0,716.4) scale(0.86,1)">F</text>
<rect x="215" y="705" width="17" height="14" fill="#8c8c8c" shape-rendering="crispEdges"/>
<text class="aa" transform="translate(223.5,716.4) scale(0.86,1)">L</text>
<rect x="232" y="705" width="18" height="14" fill="#b0b0b0" shape-rendering="crispEdges"/>
<text class="aa" transform="translate(241.0,716.4) scale(0.86,1)">R</text>
<rect x="250" y="705" width="17" height="14" fill="#8c8c8c" shape-rendering="crispEdges"/>
<text class="aa" transform="translate(258.5,716.4) scale(0.86,1)">Y</text>
<rect x="267" y="705" width="18" height="14" fill="#b0b0b0" shape-rendering="crispEdges"/>
<text class="aa" transform="translate(276.0,716.4) scale(0.86,1)">P</text>
<rect x="285" y="705" width="17" height="14" fill="#8c8c8c" shape-rendering="crispEdges"/>
<text class="aa" transform="translate(293.5,716.4) scale(0.86,1)">L</text>
<rect x="302" y="705" width="18" height="14" fill="#b0b0b0" shape-rendering="crispEdges"/>
<text class="aa" transform="translate(311.0,716.4) scale(0.86,1)">I</text>
<rect x="320" y="705" width="17" height="14" fill="#8c8c8c" shape-rendering="crispEdges"/>
<text class="aa" transform="translate(328.5,716.4) scale(0.86,1)">L</text>
<rect x="337" y="705" width="17" height="14" fill="#b0b0b0" shape-rendering="crispEdges"/>
<text class="aa" transform="translate(345.5,716.4) scale(0.86,1)">W</text>
<rect x="354" y="705" width="18" height="14" fill="#8c8c8c" shape-rendering="crispEdges"/>
<text class="aa" transform="translate(363.0,716.4) scale(0.86,1)">I</text>
<rect x="372" y="705" width="17" height="14" fill="#b0b0b0" shape-rendering="crispEdges"/>
<text class="aa" transform="translate(380.5,716.4) scale(0.86,1)">T</text>
<rect x="389" y="705" width="18" height="14" fill="#8c8c8c" shape-rendering="crispEdges"/>
<text class="aa" transform="translate(398.0,716.4) scale(0.86,1)">V</text>
<rect x="407" y="705" width="17" height="14" fill="#b0b0b0" shape-rendering="crispEdges"/>
<text class="aa" transform="translate(415.5,716.4) scale(0.86,1)">L</text>
<rect x="424" y="705" width="18" height="14" fill="#8c8c8c" shape-rendering="crispEdges"/>
<text class="aa" transform="translate(433.0,716.4) scale(0.86,1)">P</text>
<rect x="442" y="705" width="17" height="14" fill="#b0b0b0" shape-rendering="crispEdges"/>
<text class="aa" transform="translate(450.5,716.4) scale(0.86,1)">P</text>
<rect x="459" y="705" width="18" height="14" fill="#8c8c8c" shape-rendering="crispEdges"/>
<text class="aa" transform="translate(468.0,716.4) scale(0.86,1)">C</text>
<rect x="477" y="705" width="17" height="14" fill="#b0b0b0" shape-rendering="crispEdges"/>
<text class="aa" transform="translate(485.5,716.4) scale(0.86,1)">I</text>
<rect x="494" y="705" width="18" height="14" fill="#8c8c8c" shape-rendering="crispEdges"/>
<text class="aa" transform="translate(503.0,716.4) scale(0.86,1)">S</text>
<rect x="512" y="705" width="17" height="14" fill="#b0b0b0" shape-rendering="crispEdges"/>
<text class="aa" transform="translate(520.5,716.4) scale(0.86,1)">Y</text>
<rect x="529" y="705" width="17" height="14" fill="#ff0000" shape-rendering="crispEdges"/>
<text class="aa" transform="translate(537.5,716.3) scale(0.95,1)" style="font-size:14.5px">*</text>
<rect x="546" y="705" width="18" height="14" fill="#b0b0b0" shape-rendering="crispEdges"/>
<text class="aa" transform="translate(555.0,716.4) scale(0.86,1)">L</text>
<rect x="564" y="705" width="17" height="14" fill="#8c8c8c" shape-rendering="crispEdges"/>
<text class="aa" transform="translate(572.5,716.4) scale(0.86,1)">I</text>
<rect x="581" y="705" width="18" height="14" fill="#b0b0b0" shape-rendering="crispEdges"/>
<text class="aa" transform="translate(590.0,716.4) scale(0.86,1)">R</text>
<rect x="599" y="705" width="17" height="14" fill="#8c8c8c" shape-rendering="crispEdges"/>
<text class="aa" transform="translate(607.5,716.4) scale(0.86,1)">L</text>
<rect x="616" y="705" width="18" height="14" fill="#b0b0b0" shape-rendering="crispEdges"/>
<text class="aa" transform="translate(625.0,716.4) scale(0.86,1)">T</text>
<rect x="634" y="705" width="17" height="14" fill="#8c8c8c" shape-rendering="crispEdges"/>
<text class="aa" transform="translate(642.5,716.4) scale(0.86,1)">I</text>
<rect x="651" y="705" width="18" height="14" fill="#b0b0b0" shape-rendering="crispEdges"/>
<text class="aa" transform="translate(660.0,716.4) scale(0.86,1)">R</text>
<rect x="669" y="705" width="17" height="14" fill="#8c8c8c" shape-rendering="crispEdges"/>
<text class="aa" transform="translate(677.5,716.4) scale(0.86,1)">I</text>
<rect x="686" y="705" width="18" height="14" fill="#b0b0b0" shape-rendering="crispEdges"/>
<text class="aa" transform="translate(695.0,716.4) scale(0.86,1)">N</text>
<rect x="704" y="705" width="17" height="14" fill="#ff0000" shape-rendering="crispEdges"/>
<text class="aa" transform="translate(712.5,716.3) scale(0.95,1)" style="font-size:14.5px">*</text>
<rect x="721" y="705" width="17" height="14" fill="#b0b0b0" shape-rendering="crispEdges"/>
<text class="aa" transform="translate(729.5,716.4) scale(0.86,1)">Y</text>
<rect x="738" y="705" width="18" height="14" fill="#8c8c8c" shape-rendering="crispEdges"/>
<text class="aa" transform="translate(747.0,716.4) scale(0.86,1)">S</text>
<rect x="756" y="705" width="17" height="14" fill="#b0b0b0" shape-rendering="crispEdges"/>
<text class="aa" transform="translate(764.5,716.4) scale(0.86,1)">S</text>
<rect x="773" y="705" width="18" height="14" fill="#8c8c8c" shape-rendering="crispEdges"/>
<text class="aa" transform="translate(782.0,716.4) scale(0.86,1)">G</text>
<rect x="791" y="705" width="17" height="14" fill="#b0b0b0" shape-rendering="crispEdges"/>
<text class="aa" transform="translate(799.5,716.4) scale(0.86,1)">P</text>
<rect x="808" y="705" width="18" height="14" fill="#8c8c8c" shape-rendering="crispEdges"/>
<rect x="826" y="705" width="17" height="14" fill="#b0b0b0" shape-rendering="crispEdges"/>
<rect x="843" y="705" width="18" height="14" fill="#8c8c8c" shape-rendering="crispEdges"/>
<rect x="861" y="705" width="17" height="14" fill="#b0b0b0" shape-rendering="crispEdges"/>
<rect x="878" y="705" width="18" height="14" fill="#8c8c8c" shape-rendering="crispEdges"/>
<rect x="896" y="705" width="17" height="14" fill="#b0b0b0" shape-rendering="crispEdges"/>
<rect x="913" y="705" width="17" height="14" fill="#8c8c8c" shape-rendering="crispEdges"/>
<rect x="930" y="705" width="18" height="14" fill="#b0b0b0" shape-rendering="crispEdges"/>
<rect x="948" y="705" width="17" height="14" fill="#8c8c8c" shape-rendering="crispEdges"/>
<rect x="965" y="705" width="18" height="14" fill="#b0b0b0" shape-rendering="crispEdges"/>
<rect x="983" y="705" width="17" height="14" fill="#8c8c8c" shape-rendering="crispEdges"/>
<rect x="1000" y="705" width="18" height="14" fill="#b0b0b0" shape-rendering="crispEdges"/>
<rect x="1018" y="705" width="17" height="14" fill="#8c8c8c" shape-rendering="crispEdges"/>
<rect x="1035" y="705" width="18" height="14" fill="#b0b0b0" shape-rendering="crispEdges"/>
<rect x="1053" y="705" width="17" height="14" fill="#8c8c8c" shape-rendering="crispEdges"/>
<rect x="1070" y="705" width="18" height="14" fill="#b0b0b0" shape-rendering="crispEdges"/>
<rect x="1088" y="705" width="17" height="14" fill="#8c8c8c" shape-rendering="crispEdges"/>
<rect x="1105" y="705" width="17" height="14" fill="#b0b0b0" shape-rendering="crispEdges"/>
<rect x="1122" y="705" width="18" height="14" fill="#8c8c8c" shape-rendering="crispEdges"/>
<rect x="1140" y="705" width="17" height="14" fill="#b0b0b0" shape-rendering="crispEdges"/>
<rect x="1157" y="705" width="18" height="14" fill="#8c8c8c" shape-rendering="crispEdges"/>
<rect x="1175" y="705" width="17" height="14" fill="#b0b0b0" shape-rendering="crispEdges"/>
<rect x="1192" y="705" width="18" height="14" fill="#8c8c8c" shape-rendering="crispEdges"/>
<rect x="1210" y="705" width="17" height="14" fill="#b0b0b0" shape-rendering="crispEdges"/>
<rect x="1227" y="705" width="18" height="14" fill="#ff0000" shape-rendering="crispEdges"/>
<text class="aa" transform="translate(1236.0,716.3) scale(0.95,1)" style="font-size:14.5px">*</text>
<rect x="1245" y="705" width="17" height="14" fill="#b0b0b0" shape-rendering="crispEdges"/>
<text class="aa" transform="translate(1253.5,716.4) scale(0.86,1)">T</text>
<rect x="1262" y="705" width="18" height="14" fill="#ff0000" shape-rendering="crispEdges"/>
<text class="aa" transform="translate(1271.0,716.3) scale(0.95,1)" style="font-size:14.5px">*</text>
<rect x="1280" y="705" width="17" height="14" fill="#b0b0b0" shape-rendering="crispEdges"/>
<text class="aa" transform="translate(1288.5,716.4) scale(0.86,1)">S</text>
<rect x="1297" y="705" width="17" height="14" fill="#8c8c8c" shape-rendering="crispEdges"/>
<text class="aa" transform="translate(1305.5,716.4) scale(0.86,1)">P</text>
<rect x="1314" y="705" width="18" height="14" fill="#b0b0b0" shape-rendering="crispEdges"/>
<text class="aa" transform="translate(1323.0,716.4) scale(0.86,1)">E</text>
<rect x="1332" y="705" width="14" height="14" fill="#8c8c8c" shape-rendering="crispEdges"/>
<text class="aa" transform="translate(1340.5,716.4) scale(0.86,1)">H</text>
<rect x="175" y="719" width="11" height="14" fill="#b0b0b0" shape-rendering="crispEdges"/>
<text class="aa" transform="translate(177.0,730.4) scale(0.86,1)">V</text>
<rect x="186" y="719" width="17" height="14" fill="#8c8c8c" shape-rendering="crispEdges"/>
<text class="aa" transform="translate(194.5,730.4) scale(0.86,1)">L</text>
<rect x="203" y="719" width="18" height="14" fill="#b0b0b0" shape-rendering="crispEdges"/>
<text class="aa" transform="translate(212.0,730.4) scale(0.86,1)">S</text>
<rect x="221" y="719" width="17" height="14" fill="#8c8c8c" shape-rendering="crispEdges"/>
<text class="aa" transform="translate(229.5,730.4) scale(0.86,1)">C</text>
<rect x="238" y="719" width="18" height="14" fill="#b0b0b0" shape-rendering="crispEdges"/>
<text class="aa" transform="translate(247.0,730.4) scale(0.86,1)">V</text>
<rect x="256" y="719" width="17" height="14" fill="#8c8c8c" shape-rendering="crispEdges"/>
<text class="aa" transform="translate(264.5,730.4) scale(0.86,1)">I</text>
<rect x="273" y="719" width="17" height="14" fill="#b0b0b0" shape-rendering="crispEdges"/>
<text class="aa" transform="translate(281.5,730.4) scale(0.86,1)">P</text>
<rect x="290" y="719" width="18" height="14" fill="#ff0000" shape-rendering="crispEdges"/>
<text class="aa" transform="translate(299.0,730.3) scale(0.95,1)" style="font-size:14.5px">*</text>
<rect x="308" y="719" width="17" height="14" fill="#b0b0b0" shape-rendering="crispEdges"/>
<text class="aa" transform="translate(316.5,730.4) scale(0.86,1)">F</text>
<rect x="325" y="719" width="18" height="14" fill="#8c8c8c" shape-rendering="crispEdges"/>
<text class="aa" transform="translate(334.0,730.4) scale(0.86,1)">C</text>
<rect x="343" y="719" width="17" height="14" fill="#b0b0b0" shape-rendering="crispEdges"/>
<text class="aa" transform="translate(351.5,730.4) scale(0.86,1)">G</text>
<rect x="360" y="719" width="18" height="14" fill="#ff0000" shape-rendering="crispEdges"/>
<text class="aa" transform="translate(369.0,730.3) scale(0.95,1)" style="font-size:14.5px">*</text>
<rect x="378" y="719" width="17" height="14" fill="#b0b0b0" shape-rendering="crispEdges"/>
<text class="aa" transform="translate(386.5,730.4) scale(0.86,1)">P</text>
<rect x="395" y="719" width="18" height="14" fill="#8c8c8c" shape-rendering="crispEdges"/>
<text class="aa" transform="translate(404.0,730.4) scale(0.86,1)">Y</text>
<rect x="413" y="719" width="17" height="14" fill="#b0b0b0" shape-rendering="crispEdges"/>
<text class="aa" transform="translate(421.5,730.4) scale(0.86,1)">Y</text>
<rect x="430" y="719" width="18" height="14" fill="#8c8c8c" shape-rendering="crispEdges"/>
<text class="aa" transform="translate(439.0,730.4) scale(0.86,1)">R</text>
<rect x="448" y="719" width="17" height="14" fill="#b0b0b0" shape-rendering="crispEdges"/>
<text class="aa" transform="translate(456.5,730.4) scale(0.86,1)">H</text>
<rect x="465" y="719" width="17" height="14" fill="#8c8c8c" shape-rendering="crispEdges"/>
<text class="aa" transform="translate(473.5,730.4) scale(0.86,1)">A</text>
<rect x="482" y="719" width="18" height="14" fill="#b0b0b0" shape-rendering="crispEdges"/>
<text class="aa" transform="translate(491.0,730.4) scale(0.86,1)">L</text>
<rect x="500" y="719" width="17" height="14" fill="#8c8c8c" shape-rendering="crispEdges"/>
<text class="aa" transform="translate(508.5,730.4) scale(0.86,1)">V</text>
<rect x="517" y="719" width="18" height="14" fill="#b0b0b0" shape-rendering="crispEdges"/>
<text class="aa" transform="translate(526.0,730.4) scale(0.86,1)">I</text>
<rect x="535" y="719" width="17" height="14" fill="#8c8c8c" shape-rendering="crispEdges"/>
<text class="aa" transform="translate(543.5,730.4) scale(0.86,1)">N</text>
<rect x="552" y="719" width="18" height="14" fill="#ff0000" shape-rendering="crispEdges"/>
<text class="aa" transform="translate(561.0,730.3) scale(0.95,1)" style="font-size:14.5px">*</text>
<rect x="570" y="719" width="17" height="14" fill="#8c8c8c" shape-rendering="crispEdges"/>
<text class="aa" transform="translate(578.5,730.4) scale(0.86,1)">Y</text>
<rect x="587" y="719" width="18" height="14" fill="#b0b0b0" shape-rendering="crispEdges"/>
<text class="aa" transform="translate(596.0,730.4) scale(0.86,1)">D</text>
<rect x="605" y="719" width="17" height="14" fill="#8c8c8c" shape-rendering="crispEdges"/>
<text class="aa" transform="translate(613.5,730.4) scale(0.86,1)">S</text>
<rect x="622" y="719" width="18" height="14" fill="#b0b0b0" shape-rendering="crispEdges"/>
<text class="aa" transform="translate(631.0,730.4) scale(0.86,1)">L</text>
<rect x="640" y="719" width="17" height="14" fill="#ff0000" shape-rendering="crispEdges"/>
<text class="aa" transform="translate(648.5,730.3) scale(0.95,1)" style="font-size:14.5px">*</text>
<rect x="657" y="719" width="17" height="14" fill="#b0b0b0" shape-rendering="crispEdges"/>
<text class="aa" transform="translate(665.5,730.4) scale(0.86,1)">E</text>
<rect x="674" y="719" width="18" height="14" fill="#ff0000" shape-rendering="crispEdges"/>
<text class="aa" transform="translate(683.0,730.3) scale(0.95,1)" style="font-size:14.5px">*</text>
<rect x="692" y="719" width="17" height="14" fill="#b0b0b0" shape-rendering="crispEdges"/>
<text class="aa" transform="translate(700.5,730.4) scale(0.86,1)">T</text>
<rect x="709" y="719" width="18" height="14" fill="#8c8c8c" shape-rendering="crispEdges"/>
<text class="aa" transform="translate(718.0,730.4) scale(0.86,1)">S</text>
<rect x="727" y="719" width="17" height="14" fill="#b0b0b0" shape-rendering="crispEdges"/>
<text class="aa" transform="translate(735.5,730.4) scale(0.86,1)">I</text>
<rect x="744" y="719" width="18" height="14" fill="#8c8c8c" shape-rendering="crispEdges"/>
<text class="aa" transform="translate(753.0,730.4) scale(0.86,1)">L</text>
<rect x="762" y="719" width="17" height="14" fill="#b0b0b0" shape-rendering="crispEdges"/>
<text class="aa" transform="translate(770.5,730.4) scale(0.86,1)">L</text>
<rect x="779" y="719" width="18" height="14" fill="#8c8c8c" shape-rendering="crispEdges"/>
<text class="aa" transform="translate(788.0,730.4) scale(0.86,1)">V</text>
<rect x="797" y="719" width="17" height="14" fill="#b0b0b0" shape-rendering="crispEdges"/>
<text class="aa" transform="translate(805.5,730.4) scale(0.86,1)">P</text>
<rect x="814" y="719" width="18" height="14" fill="#8c8c8c" shape-rendering="crispEdges"/>
<rect x="832" y="719" width="17" height="14" fill="#b0b0b0" shape-rendering="crispEdges"/>
<rect x="849" y="719" width="17" height="14" fill="#8c8c8c" shape-rendering="crispEdges"/>
<rect x="866" y="719" width="18" height="14" fill="#b0b0b0" shape-rendering="crispEdges"/>
<rect x="884" y="719" width="17" height="14" fill="#00ff00" shape-rendering="crispEdges"/>
<rect x="901" y="719" width="18" height="14" fill="#b0b0b0" shape-rendering="crispEdges"/>
<rect x="919" y="719" width="17" height="14" fill="#8c8c8c" shape-rendering="crispEdges"/>
<rect x="936" y="719" width="18" height="14" fill="#b0b0b0" shape-rendering="crispEdges"/>
<rect x="954" y="719" width="17" height="14" fill="#8c8c8c" shape-rendering="crispEdges"/>
<rect x="971" y="719" width="18" height="14" fill="#b0b0b0" shape-rendering="crispEdges"/>
<rect x="989" y="719" width="17" height="14" fill="#8c8c8c" shape-rendering="crispEdges"/>
<rect x="1006" y="719" width="18" height="14" fill="#b0b0b0" shape-rendering="crispEdges"/>
<rect x="1024" y="719" width="17" height="14" fill="#8c8c8c" shape-rendering="crispEdges"/>
<rect x="1041" y="719" width="17" height="14" fill="#b0b0b0" shape-rendering="crispEdges"/>
<rect x="1058" y="719" width="18" height="14" fill="#8c8c8c" shape-rendering="crispEdges"/>
<rect x="1076" y="719" width="17" height="14" fill="#b0b0b0" shape-rendering="crispEdges"/>
<rect x="1093" y="719" width="18" height="14" fill="#8c8c8c" shape-rendering="crispEdges"/>
<rect x="1111" y="719" width="17" height="14" fill="#b0b0b0" shape-rendering="crispEdges"/>
<rect x="1128" y="719" width="18" height="14" fill="#8c8c8c" shape-rendering="crispEdges"/>
<rect x="1146" y="719" width="17" height="14" fill="#b0b0b0" shape-rendering="crispEdges"/>
<rect x="1163" y="719" width="18" height="14" fill="#8c8c8c" shape-rendering="crispEdges"/>
<rect x="1181" y="719" width="17" height="14" fill="#b0b0b0" shape-rendering="crispEdges"/>
<rect x="1198" y="719" width="18" height="14" fill="#8c8c8c" shape-rendering="crispEdges"/>
<rect x="1216" y="719" width="17" height="14" fill="#b0b0b0" shape-rendering="crispEdges"/>
<text class="aa" transform="translate(1224.5,730.4) scale(0.86,1)">C</text>
<rect x="1233" y="719" width="17" height="14" fill="#8c8c8c" shape-rendering="crispEdges"/>
<text class="aa" transform="translate(1241.5,730.4) scale(0.86,1)">E</text>
<rect x="1250" y="719" width="18" height="14" fill="#b0b0b0" shape-rendering="crispEdges"/>
<text class="aa" transform="translate(1259.0,730.4) scale(0.86,1)">P</text>
<rect x="1268" y="719" width="17" height="14" fill="#8c8c8c" shape-rendering="crispEdges"/>
<text class="aa" transform="translate(1276.5,730.4) scale(0.86,1)">D</text>
<rect x="1285" y="719" width="18" height="14" fill="#b0b0b0" shape-rendering="crispEdges"/>
<text class="aa" transform="translate(1294.0,730.4) scale(0.86,1)">H</text>
<rect x="1303" y="719" width="17" height="14" fill="#8c8c8c" shape-rendering="crispEdges"/>
<text class="aa" transform="translate(1311.5,730.4) scale(0.86,1)">Q</text>
<rect x="1320" y="719" width="18" height="14" fill="#b0b0b0" shape-rendering="crispEdges"/>
<text class="aa" transform="translate(1329.0,730.4) scale(0.86,1)">N</text>
<rect x="1338" y="719" width="8" height="14" fill="#8c8c8c" shape-rendering="crispEdges"/>
<text class="aa" transform="translate(1346.5,730.4) scale(0.86,1)">T</text>
<rect x="175" y="733" width="17" height="14" fill="#b0b0b0" shape-rendering="crispEdges"/>
<text class="aa" transform="translate(183.0,744.4) scale(0.86,1)">F</text>
<rect x="192" y="733" width="17" height="14" fill="#8c8c8c" shape-rendering="crispEdges"/>
<text class="aa" transform="translate(200.5,744.4) scale(0.86,1)">F</text>
<rect x="209" y="733" width="17" height="14" fill="#b0b0b0" shape-rendering="crispEdges"/>
<text class="aa" transform="translate(217.5,744.4) scale(0.86,1)">P</text>
<rect x="226" y="733" width="18" height="14" fill="#8c8c8c" shape-rendering="crispEdges"/>
<text class="aa" transform="translate(235.0,744.4) scale(0.86,1)">A</text>
<rect x="244" y="733" width="17" height="14" fill="#b0b0b0" shape-rendering="crispEdges"/>
<text class="aa" transform="translate(252.5,744.4) scale(0.86,1)">L</text>
<rect x="261" y="733" width="18" height="14" fill="#8c8c8c" shape-rendering="crispEdges"/>
<text class="aa" transform="translate(270.0,744.4) scale(0.86,1)">S</text>
<rect x="279" y="733" width="17" height="14" fill="#b0b0b0" shape-rendering="crispEdges"/>
<text class="aa" transform="translate(287.5,744.4) scale(0.86,1)">P</text>
<rect x="296" y="733" width="18" height="14" fill="#8c8c8c" shape-rendering="crispEdges"/>
<text class="aa" transform="translate(305.0,744.4) scale(0.86,1)">D</text>
<rect x="314" y="733" width="17" height="14" fill="#b0b0b0" shape-rendering="crispEdges"/>
<text class="aa" transform="translate(322.5,744.4) scale(0.86,1)">S</text>
<rect x="331" y="733" width="18" height="14" fill="#8c8c8c" shape-rendering="crispEdges"/>
<text class="aa" transform="translate(340.0,744.4) scale(0.86,1)">V</text>
<rect x="349" y="733" width="17" height="14" fill="#b0b0b0" shape-rendering="crispEdges"/>
<text class="aa" transform="translate(357.5,744.4) scale(0.86,1)">D</text>
<rect x="366" y="733" width="18" height="14" fill="#8c8c8c" shape-rendering="crispEdges"/>
<text class="aa" transform="translate(375.0,744.4) scale(0.86,1)">N</text>
<rect x="384" y="733" width="17" height="14" fill="#b0b0b0" shape-rendering="crispEdges"/>
<text class="aa" transform="translate(392.5,744.4) scale(0.86,1)">R</text>
<rect x="401" y="733" width="17" height="14" fill="#8c8c8c" shape-rendering="crispEdges"/>
<text class="aa" transform="translate(409.5,744.4) scale(0.86,1)">I</text>
<rect x="418" y="733" width="18" height="14" fill="#b0b0b0" shape-rendering="crispEdges"/>
<text class="aa" transform="translate(427.0,744.4) scale(0.86,1)">T</text>
<rect x="436" y="733" width="17" height="14" fill="#8c8c8c" shape-rendering="crispEdges"/>
<text class="aa" transform="translate(444.5,744.4) scale(0.86,1)">A</text>
<rect x="453" y="733" width="18" height="14" fill="#00ff00" shape-rendering="crispEdges"/>
<text class="aa" transform="translate(462.0,744.4) scale(0.86,1)">M</text>
<rect x="471" y="733" width="17" height="14" fill="#8c8c8c" shape-rendering="crispEdges"/>
<text class="aa" transform="translate(479.5,744.4) scale(0.86,1)">H</text>
<rect x="488" y="733" width="18" height="14" fill="#ff0000" shape-rendering="crispEdges"/>
<text class="aa" transform="translate(497.0,744.3) scale(0.95,1)" style="font-size:14.5px">*</text>
<rect x="506" y="733" width="17" height="14" fill="#8c8c8c" shape-rendering="crispEdges"/>
<text class="aa" transform="translate(514.5,744.4) scale(0.86,1)">L</text>
<rect x="523" y="733" width="18" height="14" fill="#b0b0b0" shape-rendering="crispEdges"/>
<text class="aa" transform="translate(532.0,744.4) scale(0.86,1)">L</text>
<rect x="541" y="733" width="17" height="14" fill="#8c8c8c" shape-rendering="crispEdges"/>
<text class="aa" transform="translate(549.5,744.4) scale(0.86,1)">I</text>
<rect x="558" y="733" width="18" height="14" fill="#b0b0b0" shape-rendering="crispEdges"/>
<text class="aa" transform="translate(567.0,744.4) scale(0.86,1)">N</text>
<rect x="576" y="733" width="17" height="14" fill="#8c8c8c" shape-rendering="crispEdges"/>
<text class="aa" transform="translate(584.5,744.4) scale(0.86,1)">T</text>
<rect x="593" y="733" width="17" height="14" fill="#b0b0b0" shape-rendering="crispEdges"/>
<text class="aa" transform="translate(601.5,744.4) scale(0.86,1)">T</text>
<rect x="610" y="733" width="18" height="14" fill="#8c8c8c" shape-rendering="crispEdges"/>
<text class="aa" transform="translate(619.0,744.4) scale(0.86,1)">H</text>
<rect x="628" y="733" width="17" height="14" fill="#b0b0b0" shape-rendering="crispEdges"/>
<text class="aa" transform="translate(636.5,744.4) scale(0.86,1)">Y</text>
<rect x="645" y="733" width="18" height="14" fill="#8c8c8c" shape-rendering="crispEdges"/>
<text class="aa" transform="translate(654.0,744.4) scale(0.86,1)">K</text>
<rect x="663" y="733" width="17" height="14" fill="#b0b0b0" shape-rendering="crispEdges"/>
<text class="aa" transform="translate(671.5,744.4) scale(0.86,1)">N</text>
<rect x="680" y="733" width="18" height="14" fill="#8c8c8c" shape-rendering="crispEdges"/>
<text class="aa" transform="translate(689.0,744.4) scale(0.86,1)">K</text>
<rect x="698" y="733" width="17" height="14" fill="#b0b0b0" shape-rendering="crispEdges"/>
<text class="aa" transform="translate(706.5,744.4) scale(0.86,1)">L</text>
<rect x="715" y="733" width="18" height="14" fill="#8c8c8c" shape-rendering="crispEdges"/>
<text class="aa" transform="translate(724.0,744.4) scale(0.86,1)">V</text>
<rect x="733" y="733" width="17" height="14" fill="#b0b0b0" shape-rendering="crispEdges"/>
<text class="aa" transform="translate(741.5,744.4) scale(0.86,1)">F</text>
<rect x="750" y="733" width="18" height="14" fill="#8c8c8c" shape-rendering="crispEdges"/>
<text class="aa" transform="translate(759.0,744.4) scale(0.86,1)">F</text>
<rect x="768" y="733" width="17" height="14" fill="#b0b0b0" shape-rendering="crispEdges"/>
<text class="aa" transform="translate(776.5,744.4) scale(0.86,1)">W</text>
<rect x="785" y="733" width="17" height="14" fill="#8c8c8c" shape-rendering="crispEdges"/>
<text class="aa" transform="translate(793.5,744.4) scale(0.86,1)">S</text>
<rect x="802" y="733" width="18" height="14" fill="#b0b0b0" shape-rendering="crispEdges"/>
<text class="aa" transform="translate(811.0,744.4) scale(0.86,1)">P</text>
<rect x="820" y="733" width="17" height="14" fill="#8c8c8c" shape-rendering="crispEdges"/>
<rect x="837" y="733" width="18" height="14" fill="#b0b0b0" shape-rendering="crispEdges"/>
<rect x="855" y="733" width="17" height="14" fill="#8c8c8c" shape-rendering="crispEdges"/>
<rect x="872" y="733" width="18" height="14" fill="#b0b0b0" shape-rendering="crispEdges"/>
<rect x="890" y="733" width="17" height="14" fill="#8c8c8c" shape-rendering="crispEdges"/>
<rect x="907" y="733" width="18" height="14" fill="#b0b0b0" shape-rendering="crispEdges"/>
<rect x="925" y="733" width="17" height="14" fill="#8c8c8c" shape-rendering="crispEdges"/>
<rect x="942" y="733" width="18" height="14" fill="#b0b0b0" shape-rendering="crispEdges"/>
<rect x="960" y="733" width="17" height="14" fill="#8c8c8c" shape-rendering="crispEdges"/>
<rect x="977" y="733" width="17" height="14" fill="#b0b0b0" shape-rendering="crispEdges"/>
<rect x="994" y="733" width="18" height="14" fill="#8c8c8c" shape-rendering="crispEdges"/>
<rect x="1012" y="733" width="17" height="14" fill="#b0b0b0" shape-rendering="crispEdges"/>
<rect x="1029" y="733" width="18" height="14" fill="#8c8c8c" shape-rendering="crispEdges"/>
<rect x="1047" y="733" width="17" height="14" fill="#b0b0b0" shape-rendering="crispEdges"/>
<rect x="1064" y="733" width="18" height="14" fill="#8c8c8c" shape-rendering="crispEdges"/>
<rect x="1082" y="733" width="17" height="14" fill="#b0b0b0" shape-rendering="crispEdges"/>
<rect x="1099" y="733" width="18" height="14" fill="#8c8c8c" shape-rendering="crispEdges"/>
<rect x="1117" y="733" width="17" height="14" fill="#b0b0b0" shape-rendering="crispEdges"/>
<rect x="1134" y="733" width="18" height="14" fill="#8c8c8c" shape-rendering="crispEdges"/>
<rect x="1152" y="733" width="17" height="14" fill="#ff0000" shape-rendering="crispEdges"/>
<rect x="1169" y="733" width="17" height="14" fill="#8c8c8c" shape-rendering="crispEdges"/>
<rect x="1186" y="733" width="18" height="14" fill="#ff0000" shape-rendering="crispEdges"/>
<rect x="1204" y="733" width="17" height="14" fill="#8c8c8c" shape-rendering="crispEdges"/>
<rect x="1221" y="733" width="18" height="14" fill="#b0b0b0" shape-rendering="crispEdges"/>
<text class="aa" transform="translate(1230.0,744.4) scale(0.86,1)">V</text>
<rect x="1239" y="733" width="17" height="14" fill="#8c8c8c" shape-rendering="crispEdges"/>
<text class="aa" transform="translate(1247.5,744.4) scale(0.86,1)">N</text>
<rect x="1256" y="733" width="18" height="14" fill="#b0b0b0" shape-rendering="crispEdges"/>
<text class="aa" transform="translate(1265.0,744.4) scale(0.86,1)">L</text>
<rect x="1274" y="733" width="17" height="14" fill="#8c8c8c" shape-rendering="crispEdges"/>
<text class="aa" transform="translate(1282.5,744.4) scale(0.86,1)">I</text>
<rect x="1291" y="733" width="18" height="14" fill="#b0b0b0" shape-rendering="crispEdges"/>
<text class="aa" transform="translate(1300.0,744.4) scale(0.86,1)">T</text>
<rect x="1309" y="733" width="17" height="14" fill="#8c8c8c" shape-rendering="crispEdges"/>
<text class="aa" transform="translate(1317.5,744.4) scale(0.86,1)">R</text>
<rect x="1326" y="733" width="18" height="14" fill="#b0b0b0" shape-rendering="crispEdges"/>
<text class="aa" transform="translate(1335.0,744.4) scale(0.86,1)">T</text>
<rect x="1344" y="733" width="2" height="14" fill="#8c8c8c" shape-rendering="crispEdges"/>
</g>
</svg>
<div class="a" style="left:176px;top:150px;width:1170px;height:20px;overflow:hidden;">
<div class="t rl" style="left:1.4px;top:7px;width:60px;margin-left:-30px;text-align:center;">3,460 bp</div>
<div class="t rl" style="left:118.3px;top:7px;width:60px;margin-left:-30px;text-align:center;">3,480 bp</div>
<div class="t rl" style="left:234.6px;top:7px;width:60px;margin-left:-30px;text-align:center;">3,500 bp</div>
<div class="t rl" style="left:351.0px;top:7px;width:60px;margin-left:-30px;text-align:center;">3,520 bp</div>
<div class="t rl" style="left:467.3px;top:7px;width:60px;margin-left:-30px;text-align:center;">3,540 bp</div>
<div class="t rl" style="left:583.7px;top:7px;width:60px;margin-left:-30px;text-align:center;">3,560 bp</div>
<div class="t rl" style="left:700.1px;top:7px;width:60px;margin-left:-30px;text-align:center;">3,580 bp</div>
<div class="t rl" style="left:816.4px;top:7px;width:60px;margin-left:-30px;text-align:center;">3,600 bp</div>
<div class="t rl" style="left:932.8px;top:7px;width:60px;margin-left:-30px;text-align:center;">3,620 bp</div>
<div class="t rl" style="left:1049.1px;top:7px;width:60px;margin-left:-30px;text-align:center;">3,640 bp</div>
<div class="t rl" style="left:1165.5px;top:7px;width:60px;margin-left:-30px;text-align:center;">3,660 bp</div>
</div>
<div class="t " id="bp202" style="left:741px;top:134px;font-size:12px;letter-spacing:0.100px;font-weight:bold;color:#111;">202 bp</div>
<div class="t " id="rng" style="left:179px;top:204.5px;font-size:8px;letter-spacing:-0.250px;color:#1c1c1c;">[0 - 7127]</div>
<div class="a" style="left:0;top:202px;width:160px;height:484px;overflow:hidden;">
<div class="t nm" style="left:5px;top:87px;">Mapped_BNT_nopoly_SRR18534</div>
<div class="t nm" style="left:5px;top:103px;">rted.bam Coverage</div>
<div class="t nm" style="left:5px;top:330px;">Mapped_BNT_nopoly_SRR18534</div>
<div class="t nm" style="left:5px;top:346px;">rted.bam</div>
</div>
<div class="t nm" style="left:5px;top:695px;">Sequence</div>
<svg class="a" style="left:138px;top:692px;" width="20" height="13" viewBox="138 692 20 13"><path d="M140 696.5 H149 V694 L155.5 698.2 L149 702.5 V700 H140 Z" fill="#000"/></svg>
<div class="a" style="left:0;top:786px;width:1365px;height:1px;background:#555;"></div>
<div class="a" style="left:174px;top:785px;width:1173px;height:2px;background:#848484;"></div>
<div class="a" style="left:0;top:787px;width:1365px;height:1px;background:#000;"></div>
<div class="a" style="left:0;top:788px;width:1365px;height:16px;background:#fefefe;"></div>
<div class="sb" style="left:-1px;width:135px;"></div>
<div class="sb" style="left:137px;width:16px;"></div>
<div class="sb" style="left:156px;width:150px;"></div>
<div class="sb" style="left:309px;width:954px;"></div>
<div class="sb" style="left:1266px;width:100px;"></div>
<div class="t st" id="s1" style="left:0px;top:791.5px;font-size:11px;letter-spacing:0.125px;">3 tracks</div>
<svg class="a" style="left:138px;top:788px;" width="14" height="16" viewBox="0 0 14 16"><polygon points="4.1,2 9.5,2 13.1,5.8 13.1,11.4 9.5,15.2 4.1,15.2 0.4,11.4 0.4,5.8" fill="#a0a0a0"/><polygon points="5,4.3 8.6,4.3 11,6.8 11,10.6 8.6,13 5,13 2.6,10.6 2.6,6.8" fill="#969696"/></svg>
<div class="t st" id="s2" style="left:158px;top:791.5px;font-size:11px;letter-spacing:-0.075px;">OR134577.1-BNT162b2nop...</div>
<div class="t st" id="s3" style="left:1267px;top:791.5px;font-size:11px;letter-spacing:-0.075px;">133M of 1,584M</div>
<div id="tip" class="a lg">
<div class="t " id="tl0" style="left:3px;top:5px;font-size:10.8px;letter-spacing:-0.150px;color:#111;">Read name = SRR18534011.35242224</div>
<div class="t " id="tl1" style="left:3px;top:19px;font-size:10.8px;letter-spacing:-0.150px;color:#111;">Read length = 120bp</div>
<div class="t" id="tl2" style="left:3px;top:32px;font-size:10.8px;color:#3a3a3a;transform:scaleX(1.535);transform-origin:0 0;">----------------------</div>
<div class="t " id="tl3" style="left:3px;top:47px;font-size:10.8px;letter-spacing:-0.175px;color:#111;">Mapping = Primary @ MAPQ 60</div>
<div class="t " id="tl4" style="left:3px;top:61px;font-size:10.8px;letter-spacing:0.025px;color:#111;">Reference span = OR134577.1-BNT162b2nopolyA:3,557-3,589 (+) = 33bp</div>
<div class="t " id="tl5" style="left:3px;top:75px;font-size:10.8px;letter-spacing:0.000px;color:#111;">Cigar = 87S33M</div>
<div class="t " id="tl6" style="left:3px;top:89px;font-size:10.8px;letter-spacing:0.025px;color:#111;">Clipping = Left 87 soft</div>
<div class="t" id="tl7" style="left:3px;top:102px;font-size:10.8px;color:#3a3a3a;transform:scaleX(1.535);transform-origin:0 0;">----------------------</div>
<div class="t " id="tl8" style="left:3px;top:117px;font-size:10.8px;letter-spacing:-0.250px;color:#111;">Mate is mapped = no</div>
<div class="t " id="tl9" style="left:3px;top:131px;font-size:10.8px;letter-spacing:-0.050px;color:#111;">First in pair</div>
<div class="t" id="tl10" style="left:3px;top:144px;font-size:10.8px;color:#3a3a3a;transform:scaleX(1.535);transform-origin:0 0;">----------------------</div>
<div class="t " id="tl11" style="left:3px;top:159px;font-size:10.8px;letter-spacing:-0.275px;color:#111;">NM = 1</div>
<div class="t " id="tl12" style="left:3px;top:173px;font-size:10.8px;letter-spacing:-0.150px;color:#111;">MQ = 0</div>
<div class="t " id="tl13" style="left:3px;top:187px;font-size:10.8px;letter-spacing:-0.150px;color:#111;">AS = 32</div>
<div class="t " id="tl14" style="left:3px;top:201px;font-size:10.8px;letter-spacing:-0.425px;color:#111;">XS = 0</div>
<div class="t " id="tl15" style="left:3px;top:215px;font-size:10.8px;letter-spacing:-0.150px;color:#111;">Hidden tags: MD</div>
<div class="t " id="tl16" style="left:3px;top:237px;font-size:10.8px;letter-spacing:0.075px;color:#111;">Location = OR134577.1-BNT162b2nopolyA:3,569</div>
<div class="t " id="tl17" style="left:3px;top:251px;font-size:10.8px;letter-spacing:-0.375px;color:#111;">Base = C @ QV 37</div>
<div class="a" style="left:3px;top:229px;width:406px;height:1px;background:#4a4a4a;"></div>
</div>
</body>
</html>
